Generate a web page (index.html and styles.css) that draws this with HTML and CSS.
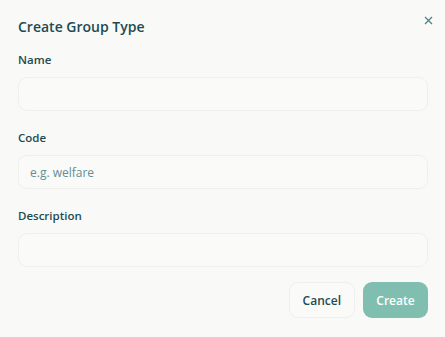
FILE: index.html
```html
<!DOCTYPE html>
<html lang="en">
<head>
  <meta charset="UTF-8">
  <title>Create Group Type</title>
  <link rel="stylesheet" href="styles.css">
</head>
<body>
  <div class="dialog">
    <button class="close" aria-label="Close">
      <svg width="9" height="9" viewBox="0 0 9 9"><path d="M1 1L8 8M8 1L1 8" stroke="currentColor" stroke-width="1.2" fill="none"/></svg>
    </button>
    <h2>Create Group Type</h2>
    <div class="field">
      <label for="name">Name</label>
      <input type="text" id="name">
    </div>
    <div class="field">
      <label for="code">Code</label>
      <input type="text" id="code" placeholder="e.g. welfare">
    </div>
    <div class="field">
      <label for="desc">Description</label>
      <input type="text" id="desc">
    </div>
    <div class="actions">
      <button class="btn btn-cancel">Cancel</button>
      <button class="btn btn-create">Create</button>
    </div>
  </div>
</body>
</html>
```

FILE: styles.css
```css
* {
  box-sizing: border-box;
}

body {
  margin: 0;
  font-family: 'Open Sans', 'Noto Sans', sans-serif;
  background: #f9f9f7;
  color: #1d4b50;
}

.dialog {
  position: relative;
  padding: 15px 17px 18px 18px;
}

.close {
  position: absolute;
  top: 13px;
  right: 12px;
  background: none;
  border: none;
  padding: 0;
  color: #4f7f84;
  cursor: pointer;
}

h2 {
  margin: 0 0 12px;
  font-size: 14px;
  font-weight: 600;
  line-height: 24px;
}

.field {
  margin-bottom: 18px;
}

.field label {
  display: block;
  font-size: 11.5px;
  font-weight: 600;
  line-height: 18px;
  margin-bottom: 8px;
}

.field input {
  width: 100%;
  height: 34px;
  padding: 0 11px;
  border: 1px solid #efefed;
  border-radius: 9px;
  background: #fafaf8;
  font-family: inherit;
  font-size: 12px;
  color: #1d4b50;
}

.field input::placeholder {
  color: #5f9094;
}

.actions {
  display: flex;
  justify-content: flex-end;
  gap: 8px;
  margin-top: -3px;
}

.btn {
  height: 36px;
  padding: 0 13px;
  border-radius: 9px;
  font-family: inherit;
  font-size: 12px;
  font-weight: 600;
  cursor: pointer;
}

.btn-cancel {
  background: #fafaf8;
  border: 1px solid #efefed;
  color: #1d4b50;
}

.btn-create {
  background: #80bfb0;
  border: none;
  color: #fff;
  width: 65px;
}
```
